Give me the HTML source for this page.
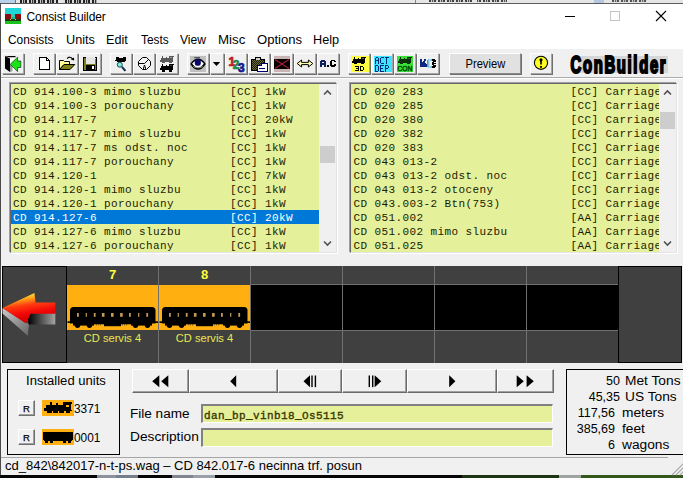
<!DOCTYPE html>
<html>
<head>
<meta charset="utf-8">
<title>Consist Builder</title>
<style>
*{margin:0;padding:0;box-sizing:border-box;}
html,body{width:683px;height:478px;overflow:hidden;background:#f0f0f0;}
body{font-family:"Liberation Sans",sans-serif;font-size:12px;color:#000;position:relative;}
.abs{position:absolute;}
#win{position:absolute;left:0;top:0;width:683px;height:478px;overflow:hidden;background:#f0f0f0;}
/* strip of window behind */
#behind{left:0;top:0;width:683px;height:3px;background:#e6e6e6;}
#topline{left:0;top:3px;width:683px;height:1px;background:#5c5c5c;}
#leftline{left:0;top:3px;width:1px;height:472px;background:#4a4a4a;}
#titlebar{left:1px;top:4px;width:682px;height:30px;background:#fff;}
#menubar{left:1px;top:34px;width:682px;height:15px;background:#fff;}
.title{left:26.5px;top:10px;font-size:12px;line-height:15px;letter-spacing:-0.1px;white-space:nowrap;}
.mi{top:33px;font-size:12px;line-height:15px;white-space:nowrap;transform-origin:0 0;}
/* toolbar */
.tb{top:53px;width:22px;height:21px;background:#f0f0f0;border-top:1px solid #fff;border-left:1px solid #fff;border-right:1px solid #a6a6a6;border-bottom:1px solid #a6a6a6;box-shadow:1px 1px 0 #707070;}
.tb svg{position:absolute;left:2px;top:2px;}
#tbline1{left:1px;top:77px;width:682px;height:1px;background:#acacac;}
#tbline2{left:1px;top:78px;width:682px;height:1px;background:#fff;}
/* list boxes */
.lb{top:83px;height:170px;background:#e5f09b;border:1px solid;border-color:#666 #e3e3e3 #e3e3e3 #666;box-shadow:-1px -1px 0 #a0a0a0,1px 1px 0 #fff;}
.lbi{position:absolute;left:0;top:0;right:0;bottom:0;overflow:hidden;}
.lb pre{font-family:"Liberation Mono",monospace;font-size:11px;line-height:14px;letter-spacing:0.4px;color:#1c1c00;position:absolute;left:1px;top:1px;white-space:pre;}
.lb .sel{position:absolute;left:0;top:126px;height:14px;background:#0078d7;}
.sb{position:absolute;top:0;right:0;width:17px;height:168px;background:#f0f0f0;}
.sb .thumb{position:absolute;left:1px;width:15px;background:#cdcdcd;}
.sb svg{position:absolute;left:0;}
/* consist panel */
#panel{left:2px;top:266px;width:680px;height:97px;background:#404040;}
.slot{position:absolute;top:0;width:92px;height:97px;border-left:1px solid #707070;}
.slot .mid{position:absolute;left:0;top:19px;width:91px;height:45px;background:#000;}
.slot .mid.on{background:#ffb010;}
.slot .num{position:absolute;left:0;top:1px;width:91px;text-align:center;font-weight:bold;font-size:13px;line-height:15px;color:#ffff3c;}
.slot .nm{position:absolute;left:0;top:65px;width:91px;text-align:center;font-size:11.1px;line-height:14px;color:#e8e850;white-space:nowrap;}
.hl1{position:absolute;left:65px;width:552px;height:1px;background:#707070;}
/* bottom */
.frame{border:1px solid #000;background:#f0f0f0;}
.nav{top:369px;height:24px;background:#f0f0f0;border-top:1px solid #fff;border-left:1px solid #fff;border-right:1px solid #6a6a6a;border-bottom:1px solid #6a6a6a;box-shadow:inset -1px -1px 0 #a0a0a0;}
.nav svg{position:absolute;top:5px;left:50%;}
.fld{left:201px;width:352px;height:19px;background:#e6f09b;border-top:2px solid #808080;border-left:2px solid #808080;border-right:1px solid #fff;border-bottom:1px solid #fff;}
.lbl{font-size:12.5px;line-height:16px;white-space:nowrap;transform-origin:0 0;}
.st{font-size:12.5px;line-height:16px;white-space:nowrap;transform-origin:0 0;}
.sl{transform:scaleX(1.10);}
.rb{left:18px;width:17px;height:16px;background:#f0f0f0;border-top:1px solid #fff;border-left:1px solid #fff;border-right:1px solid #707070;border-bottom:1px solid #707070;box-shadow:inset -1px -1px 0 #a0a0a0;font-size:9.5px;line-height:15px;text-align:center;color:#000;-webkit-text-stroke:0.25px #000;}
#status{left:1px;top:457px;width:682px;height:18px;background:#f0f0f0;}
#stline{left:1px;top:457px;width:667px;height:1px;background:#a6a6a6;}
#desk{left:0;top:475px;width:683px;height:3px;background:linear-gradient(90deg,#050505 0 97px,#8a92a0 97px 116px,#767e8c 116px 138px,#050505 138px 172px,#80868f 172px 193px,#9aa0a8 193px 215px,#050505 215px 462px,#1c3414 462px 559px,#a0a4a0 559px 581px,#34581c 581px 683px);}
</style>
</head>
<body>
<div id="win">
<div class="abs" id="behind"></div>
<div class="abs" style="left:0;top:0;width:15px;height:3px;background:#b9d1ea;"></div>
<div class="abs" style="left:15px;top:0;width:1px;height:3px;background:#777;"></div>
<div class="abs" style="left:33px;top:0;width:1px;height:3px;background:#777;"></div>
<div class="abs" style="left:20px;top:0;width:77px;height:3px;background:repeating-linear-gradient(90deg,#222 0 2px,#ccc 2px 3px,#333 3px 4px,#aaa 4px 5px,#222 5px 7px,#ddd 7px 9px);"></div>
<div class="abs" style="left:58px;top:0;width:5px;height:3px;background:#e6e6e6;"></div>
<div class="abs" style="left:415px;top:0;width:1px;height:3px;background:#888;"></div>
<div class="abs" style="left:429px;top:0;width:78px;height:2px;background:repeating-linear-gradient(90deg,#444 0 2px,#ccc 2px 3px,#555 3px 4px,#bbb 4px 5px,#444 5px 7px,#ddd 7px 9px);"></div>
<div class="abs" style="left:472px;top:0;width:5px;height:3px;background:#e6e6e6;"></div>
<div class="abs" style="left:594px;top:0;width:10px;height:3px;background:#b4c6e0;"></div>
<div class="abs" style="left:612px;top:0;width:35px;height:2px;background:repeating-linear-gradient(90deg,#555 0 2px,#ccc 2px 3px,#666 3px 4px,#bbb 4px 5px,#555 5px 7px,#ddd 7px 9px);"></div>
<div class="abs" id="topline"></div>
<div class="abs" id="titlebar"></div>
<div class="abs" id="menubar"></div>
<div class="abs" id="leftline"></div>

<!-- title icon -->
<svg class="abs" style="left:5px;top:8px" width="16" height="16" viewBox="0 0 16 16" shape-rendering="crispEdges">
<rect x="0" y="0" width="16" height="6" fill="#1fd6d6"/>
<rect x="0" y="6" width="16" height="6" fill="#8a0e0e"/>
<rect x="6" y="6" width="4" height="6" fill="#27c9b4"/>
<rect x="7" y="9" width="2" height="3" fill="#22b070"/>
<rect x="0" y="11" width="16" height="2" fill="#1c3a10"/>
<rect x="5" y="11" width="1" height="1" fill="#d8d060"/><rect x="10" y="11" width="1" height="1" fill="#d8d060"/>
<rect x="0" y="13" width="16" height="3" fill="#1ec21e"/>
</svg>
<div class="abs title">Consist Builder</div>
<!-- window controls -->
<svg class="abs" style="left:560px;top:6px" width="115" height="22" viewBox="0 0 115 22">
<path d="M5 10.5H15" stroke="#000" stroke-width="1"/>
<rect x="50.5" y="5.5" width="9" height="9" fill="none" stroke="#c4c4c4" stroke-width="1"/>
<path d="M96 5L106 15M106 5L96 15" stroke="#000" stroke-width="1.1"/>
</svg>

<!-- menu -->
<div class="abs mi" style="left:8px;transform:scaleX(0.99)">Consists</div>
<div class="abs mi" style="left:66px;transform:scaleX(1.06)">Units</div>
<div class="abs mi" style="left:106px;transform:scaleX(1.055)">Edit</div>
<div class="abs mi" style="left:141px;transform:scaleX(0.99)">Tests</div>
<div class="abs mi" style="left:180px;transform:scaleX(1.01)">View</div>
<div class="abs mi" style="left:217.5px;transform:scaleX(1.108)">Misc</div>
<div class="abs mi" style="left:256.5px;transform:scaleX(1.09)">Options</div>
<div class="abs mi" style="left:313px;transform:scaleX(1.058)">Help</div>

<!-- TOOLBAR -->
<div class="abs tb" id="b1" style="left:2px"></div>
<div class="abs tb" id="b2" style="left:33px"></div>
<div class="abs tb" id="b3" style="left:56px"></div>
<div class="abs tb" id="b4" style="left:79px"></div>
<div class="abs tb" id="b5" style="left:110px"></div>
<div class="abs tb" id="b6" style="left:133px"></div>
<div class="abs tb" id="b7" style="left:156px"></div>
<div class="abs tb" id="b8" style="left:187px"></div>
<div class="abs tb" id="b9" style="left:210px;width:14px"></div>
<div class="abs tb" id="b10" style="left:225px"></div>
<div class="abs tb" id="b11" style="left:248px"></div>
<div class="abs tb" id="b12" style="left:271px"></div>
<div class="abs tb" id="b13" style="left:294px"></div>
<div class="abs tb" id="b14" style="left:317px"></div>
<div class="abs tb" id="b15" style="left:348px"></div>
<div class="abs tb" id="b16" style="left:371px"></div>
<div class="abs tb" id="b17" style="left:394px"></div>
<div class="abs tb" id="b18" style="left:417px"></div>
<div class="abs tb" id="bprev" style="left:449px;width:72px;background:#e1e1e1;border-color:#fff #8a8a8a #8a8a8a #fff;text-align:center;font-size:12px;line-height:20px;"><span style="display:inline-block;transform:scaleX(.93)">Preview</span></div>
<div class="abs tb" id="bwarn" style="left:530px"></div>
<div class="abs" id="logo" style="left:570px;top:52px;"></div>
<div class="abs" id="tbline1"></div>
<div class="abs" id="tbline2"></div>

<svg class="abs" id="icons" style="left:0;top:0;pointer-events:none;z-index:5" width="683" height="478" viewBox="0 0 683 478">
<!-- b1 exit door -->
<g>
<polygon points="10,57 15,57 15,71 10,71" fill="#fff"/>
<polygon points="10,65 12.5,64 12.5,71 10,72" fill="#9a9a9a"/>
<polygon points="5,56 15.5,56 15.5,57.3 9,57.3" fill="#000"/>
<polygon points="5,56 10,58.5 10,72 5,68.5" fill="#000"/>
<polygon points="10.2,64.3 17.6,57.2 17.6,61 20.8,61 20.8,67.5 17.6,67.5 17.6,71.6" fill="#18e418" stroke="#0a3a0a" stroke-width="0.7"/>
</g>
<!-- b2 new -->
<g shape-rendering="crispEdges">
<polygon points="39.5,57.5 46.5,57.5 49.5,60.5 49.5,69.5 39.5,69.5" fill="#fff" stroke="#000" stroke-width="1"/>
<polyline points="46.5,57.5 46.5,60.5 49.5,60.5" fill="none" stroke="#000" stroke-width="1"/>
</g>
<!-- b3 open -->
<g stroke-linejoin="miter">
<polygon points="59.5,69.5 59.5,60.5 63.5,60.5 64.5,61.5 69.5,61.5 69.5,64.5 64,64.5" fill="#ffff99" stroke="#000" stroke-width="1"/>
<polygon points="59.5,69.5 64.2,64.5 74.8,64.5 70,69.5" fill="#7e8018" stroke="#000" stroke-width="1"/>
<path d="M67.2 58.8C68.2 56.6 71 56.6 72.6 59" fill="none" stroke="#000" stroke-width="1.1"/>
<polygon points="70.8,59.6 74.2,60.6 74,57.4" fill="#000"/>
</g>
<!-- b4 save -->
<g shape-rendering="crispEdges">
<rect x="83" y="57" width="14" height="14" fill="#000"/>
<rect x="84" y="58" width="12" height="12" fill="#7c7c20"/>
<rect x="86" y="57" width="9" height="7" fill="#e4e4e4"/>
<rect x="95" y="58" width="1" height="1" fill="#e0e0e0"/>
<rect x="86" y="65" width="9" height="5" fill="#000"/>
<rect x="92" y="66" width="2" height="3" fill="#fff"/>
</g>
<!-- b5 search -->
<g>
<g shape-rendering="crispEdges" fill="#000"><rect x="116" y="57" width="3" height="1"/><rect x="123" y="57" width="3" height="1"/><rect x="116" y="58" width="10" height="2"/><rect x="115" y="60" width="11" height="1"/><rect x="117" y="61" width="8" height="1"/></g>
<circle cx="119.8" cy="64.7" r="2.5" fill="#86ece4" stroke="#0c4a4a" stroke-width="1"/>
<path d="M122 66.8L125.4 70.8" stroke="#081838" stroke-width="2" stroke-linecap="butt"/>
<path d="M122.4 66.5L125.6 70.2" stroke="#3888b0" stroke-width="0.7"/>
</g>
<!-- b6 gauge -->
<g fill="none" stroke="#000" stroke-width="1">
<polygon points="142.5,57.5 146.5,57.5 150.5,61.5 150.5,65.5 146.5,69.5 142.5,69.5 138.5,65.5 138.5,61.5" fill="#f4f4f4"/>
<path d="M138.5 63.5H144.5L148.2 59.8"/>
<path d="M143.5 69.5v-2.5h2v2.5M144 66.5v-1h1v1" stroke-width="0.9"/>
</g>
<!-- b7 locos -->
<g shape-rendering="crispEdges" fill="#5a5a5a"><rect x="162" y="56" width="1" height="2"/><rect x="166" y="57" width="1" height="1"/><rect x="169" y="56" width="5" height="1"/><rect x="169" y="57" width="4" height="4"/><rect x="161" y="58" width="8" height="3"/><rect x="160" y="60" width="1" height="1"/><rect x="160" y="61" width="13" height="1"/><rect x="162" y="62" width="3" height="1"/><rect x="169" y="62" width="3" height="1"/><rect x="170" y="57" width="2" height="1" fill="#9a9a9a"/></g>
<g shape-rendering="crispEdges" fill="#000"><rect x="162" y="64" width="1" height="2"/><rect x="166" y="65" width="1" height="1"/><rect x="169" y="64" width="5" height="1"/><rect x="169" y="65" width="4" height="4"/><rect x="161" y="66" width="8" height="3"/><rect x="160" y="68" width="1" height="1"/><rect x="160" y="69" width="13" height="1"/><rect x="162" y="70" width="3" height="2"/><rect x="169" y="70" width="3" height="2"/><rect x="170" y="65" width="2" height="1" fill="#444"/></g>
<!-- b8 eye -->
<g>
<rect x="190" y="56" width="16" height="16" fill="#c0c0c0" shape-rendering="crispEdges"/>
<path d="M190.2 63.9C192.6 60.2 195.6 58.4 198 58.4C200.6 58.4 203.6 60.2 205.8 63.9C203.4 67.9 200.6 69.8 198 69.8C195.4 69.8 192.6 67.9 190.2 63.9Z" fill="#000"/>
<path d="M192.2 63.6C194 61.4 196 60.2 198 60.2C200 60.2 202 61.4 203.8 63.6C202.4 66 200.4 67.6 198 67.6C195.6 67.6 193.6 66 192.2 63.6Z" fill="#fff"/>
<rect x="194.8" y="59.2" width="6" height="6.6" rx="2.2" fill="#08086c"/>
<path d="M193 66.2C195.5 68.3 200.5 68.3 203 66.2" fill="none" stroke="#b0b0b0" stroke-width="0.9"/>
<path d="M192.5 65L194 66.6M203.5 65L202 66.6" stroke="#000" stroke-width="0.9"/>
<path d="M194.2 57.7H200" stroke="#333" stroke-width="0.9"/>
</g>
<!-- b9 dropdown -->
<polygon points="212.8,62 220.2,62 216.5,66" fill="#000"/>
<!-- b10 123 -->
<g font-family="Liberation Sans, sans-serif" font-weight="bold" font-size="12" stroke-width="0.7">
<text x="228.6" y="65.6" fill="#c01828" stroke="#c01828">1</text>
<text x="232.8" y="68.6" fill="#208848" stroke="#208848">2</text>
<text x="238" y="71.7" fill="#181890" stroke="#181890">3</text>
</g>
<!-- b11 clipboard -->
<defs><pattern id="dith" width="2" height="2" patternUnits="userSpaceOnUse"><rect width="2" height="2" fill="#1c1c0c"/><rect width="1" height="1" fill="#6c6c34"/><rect x="1" y="1" width="1" height="1" fill="#6c6c34"/></pattern></defs>
<g shape-rendering="crispEdges">
<rect x="251" y="59" width="14" height="12" fill="#000"/>
<rect x="252" y="60" width="12" height="10" fill="url(#dith)"/>
<rect x="255" y="57" width="6" height="3" fill="#000"/>
<rect x="256" y="58" width="4" height="2" fill="#d0d0d0"/>
<rect x="257" y="65" width="11" height="7" fill="#000070"/>
<rect x="261" y="63" width="7" height="3" fill="#000070"/>
<rect x="258" y="66" width="9" height="5" fill="#fff"/>
<rect x="262" y="64" width="5" height="2" fill="#fff"/>
<rect x="259" y="68" width="6" height="1" fill="#000070"/>
</g>
<!-- b12 X -->
<g>
<rect x="274" y="56" width="16" height="16" fill="#c8b4b4" shape-rendering="crispEdges"/>
<rect x="274" y="59" width="16" height="10" fill="#000" shape-rendering="crispEdges"/>
<path d="M275 59.5L289 68.5M289 59.5L275 68.5" stroke="#b01834" stroke-width="1.1"/>
</g>
<!-- b13 arrow -->
<polygon points="297.2,63.5 301.6,60 301.6,62.4 308.4,62.4 308.4,60 312.8,63.5 308.4,67 308.4,64.6 301.6,64.6 301.6,67" fill="#ffffb0" stroke="#000" stroke-width="1"/>
<!-- b14 A.C -->
<g shape-rendering="crispEdges">
<path d="M321 60h4v1h1v6h-2v-2h-2v2h-2v-6h1zM322 62v1h2v-1z" fill="#10205c" fill-rule="evenodd"/>
<rect x="327" y="65" width="2" height="2" fill="#000"/>
<path d="M331 60h4v1h1v1h-2v-1h-2v4h2v-1h2v2h-1v1h-4v-1h-1v-5h1z" fill="#000"/>
</g>
<!-- b15 3D -->
<g>
<rect x="351" y="56" width="18" height="16" fill="#ffff40" shape-rendering="crispEdges"/>
<g shape-rendering="crispEdges" fill="#000"><rect x="354" y="57" width="1" height="2"/><rect x="358" y="58" width="1" height="1"/><rect x="361" y="57" width="5" height="1"/><rect x="361" y="58" width="4" height="4"/><rect x="353" y="59" width="8" height="3"/><rect x="352" y="61" width="1" height="1"/><rect x="352" y="62" width="13" height="1"/><rect x="354" y="63" width="3" height="1"/><rect x="361" y="63" width="3" height="1"/><rect x="362" y="58" width="2" height="1" fill="#554"/></g>
<g shape-rendering="crispEdges" fill="#000"><rect x="355" y="66" width="4" height="1"/><rect x="358" y="67" width="1" height="1"/><rect x="356" y="68" width="3" height="1"/><rect x="358" y="69" width="1" height="1"/><rect x="355" y="70" width="4" height="1"/><rect x="360" y="66" width="3" height="1"/><rect x="360" y="67" width="1" height="1"/><rect x="363" y="67" width="1" height="1"/><rect x="360" y="68" width="1" height="1"/><rect x="363" y="68" width="1" height="1"/><rect x="360" y="69" width="1" height="1"/><rect x="363" y="69" width="1" height="1"/><rect x="360" y="70" width="3" height="1"/></g>
</g>
<!-- b16 ACT DEP -->
<g>
<rect x="374" y="56" width="18" height="16" fill="#40e4ff" shape-rendering="crispEdges"/>
<g shape-rendering="crispEdges" fill="#002c7c"><rect x="376" y="57" width="2" height="1"/><rect x="375" y="58" width="1" height="1"/><rect x="378" y="58" width="1" height="1"/><rect x="375" y="59" width="1" height="1"/><rect x="378" y="59" width="1" height="1"/><rect x="375" y="60" width="4" height="1"/><rect x="375" y="61" width="1" height="1"/><rect x="378" y="61" width="1" height="1"/><rect x="375" y="62" width="1" height="1"/><rect x="378" y="62" width="1" height="1"/><rect x="375" y="63" width="1" height="1"/><rect x="378" y="63" width="1" height="1"/><rect x="381" y="57" width="3" height="1"/><rect x="380" y="58" width="1" height="1"/><rect x="380" y="59" width="1" height="1"/><rect x="380" y="60" width="1" height="1"/><rect x="380" y="61" width="1" height="1"/><rect x="380" y="62" width="1" height="1"/><rect x="381" y="63" width="3" height="1"/><rect x="385" y="57" width="4" height="1"/><rect x="386" y="58" width="1" height="1"/><rect x="386" y="59" width="1" height="1"/><rect x="386" y="60" width="1" height="1"/><rect x="386" y="61" width="1" height="1"/><rect x="386" y="62" width="1" height="1"/><rect x="386" y="63" width="1" height="1"/></g><g shape-rendering="crispEdges" fill="#002c7c"><rect x="375" y="65" width="3" height="1"/><rect x="375" y="66" width="1" height="1"/><rect x="378" y="66" width="1" height="1"/><rect x="375" y="67" width="1" height="1"/><rect x="378" y="67" width="1" height="1"/><rect x="375" y="68" width="1" height="1"/><rect x="378" y="68" width="1" height="1"/><rect x="375" y="69" width="1" height="1"/><rect x="378" y="69" width="1" height="1"/><rect x="375" y="70" width="1" height="1"/><rect x="378" y="70" width="1" height="1"/><rect x="375" y="71" width="3" height="1"/><rect x="380" y="65" width="4" height="1"/><rect x="380" y="66" width="1" height="1"/><rect x="380" y="67" width="1" height="1"/><rect x="380" y="68" width="3" height="1"/><rect x="380" y="69" width="1" height="1"/><rect x="380" y="70" width="1" height="1"/><rect x="380" y="71" width="4" height="1"/><rect x="385" y="65" width="3" height="1"/><rect x="385" y="66" width="1" height="1"/><rect x="388" y="66" width="1" height="1"/><rect x="385" y="67" width="1" height="1"/><rect x="388" y="67" width="1" height="1"/><rect x="385" y="68" width="3" height="1"/><rect x="385" y="69" width="1" height="1"/><rect x="385" y="70" width="1" height="1"/><rect x="385" y="71" width="1" height="1"/></g>
</g>
<!-- b17 CON -->
<g>
<rect x="397" y="56" width="16" height="16" fill="#38e038" shape-rendering="crispEdges"/>
<g shape-rendering="crispEdges" fill="#0c300c"><rect x="400" y="57" width="1" height="2"/><rect x="404" y="58" width="1" height="1"/><rect x="407" y="57" width="5" height="1"/><rect x="407" y="58" width="4" height="4"/><rect x="399" y="59" width="8" height="3"/><rect x="398" y="61" width="1" height="1"/><rect x="398" y="62" width="13" height="1"/><rect x="400" y="63" width="3" height="1"/><rect x="407" y="63" width="3" height="1"/><rect x="408" y="58" width="2" height="1" fill="#1a6a1a"/></g>
<text x="397.4" y="70.8" font-family="Liberation Sans, sans-serif" font-size="6.8" textLength="15" lengthAdjust="spacingAndGlyphs" fill="#004c00" stroke="#004c00" stroke-width="0.45">CON</text>
</g>
<!-- b18 KC -->
<defs><linearGradient id="gk" x1="0" x2="1" y1="0" y2="0"><stop offset="0" stop-color="#3c8cc0"/><stop offset="0.5" stop-color="#a8e4f0"/><stop offset="1" stop-color="#58b0d8"/></linearGradient></defs>
<g shape-rendering="crispEdges">
<path d="M420 59h2v3h1v-1h1v-2h2v2h-1v2h1v1h1v3h-7z" fill="#102880"/>
<path d="M427 60h1v-1h4v2h-2v5h2v2h-4v-1h-1z" fill="url(#gk)"/>
<path d="M432 59h3v1h1v2h-2v1h2v1h-2v1h2v2h-1v1h-3v-2h1v-1h-1v-3h1v-1h-1z" fill="#000"/>
</g>
<!-- warn -->
<g>
<circle cx="541" cy="62.8" r="6.6" fill="#ffff20" stroke="#000" stroke-width="1.1"/>
<path d="M541 58.2a1.6 1.6 0 0 1 1.6 1.6c0 .8-.6 1.2-.8 1.8v3h-1.6v-3c-.2-.6-.8-1-.8-1.8a1.6 1.6 0 0 1 1.6-1.6z" fill="#000"/>
<rect x="540.1" y="66" width="1.8" height="1.8" fill="#000"/>
</g>
<!-- arrow -->
<defs>
<linearGradient id="ga" gradientUnits="userSpaceOnUse" x1="33" y1="292" x2="37" y2="318"><stop offset="0" stop-color="#fff040"/><stop offset="0.22" stop-color="#ffa018"/><stop offset="0.45" stop-color="#ff3c10"/><stop offset="0.75" stop-color="#f40808"/><stop offset="1" stop-color="#d80000"/></linearGradient>
<linearGradient id="gb" gradientUnits="userSpaceOnUse" x1="28" y1="0" x2="56" y2="0"><stop offset="0" stop-color="#000"/><stop offset="1" stop-color="#a8a8a8"/></linearGradient>
<linearGradient id="gc" gradientUnits="userSpaceOnUse" x1="4" y1="308" x2="28" y2="334"><stop offset="0" stop-color="#c8c8c8"/><stop offset="1" stop-color="#6a6a6a"/></linearGradient>
</defs>
<polygon points="2.5,308 2.5,313.5 27.8,335.8 29,324 25,322" fill="url(#gc)"/>
<polygon points="28,313 55.3,313 55.3,324.6 28.5,324.6" fill="url(#gb)"/>
<polygon points="2.5,308 34.4,293 35.6,302.4 55.3,302.4 55.3,313.8 30.5,313.8 26,323.6" fill="url(#ga)"/>
<g><path d="M70.0 323.5V310.5Q70.0 307 73.5 307H152.0Q155.5 307 155.5 310.5V323.5Z" fill="#000"/><rect x="67.5" y="321.3" width="3" height="1.6" fill="#000"/><rect x="155.0" y="321.3" width="3" height="1.6" fill="#000"/><rect x="73.0" y="323" width="21" height="2.6" fill="#000"/><circle cx="77.5" cy="325.3" r="2.7" fill="#000"/><circle cx="89.5" cy="325.3" r="2.7" fill="#000"/><rect x="131.0" y="323" width="21" height="2.6" fill="#000"/><circle cx="135.5" cy="325.3" r="2.7" fill="#000"/><circle cx="147.5" cy="325.3" r="2.7" fill="#000"/><rect x="94.0" y="323" width="38" height="1.3" fill="#000"/><rect x="104.0" y="323" width="17" height="3.2" fill="#000"/><path d="M96.0 324.8h6M122.0 324.8h6" stroke="#3a2800" stroke-width="0.8" stroke-dasharray="1 1"/><rect x="77.0" y="313" width="1.8" height="3.8" fill="#c49a5a"/><rect x="85.7" y="313" width="1.2" height="3.8" fill="#c49a5a"/><rect x="93.8" y="313" width="1.8" height="3.8" fill="#c49a5a"/><rect x="101.9" y="313" width="2.6" height="3.8" fill="#c49a5a"/><rect x="111.0" y="313" width="2.6" height="3.8" fill="#c49a5a"/><rect x="120.1" y="313" width="2.6" height="3.8" fill="#c49a5a"/><rect x="129.0" y="313" width="1.8" height="3.8" fill="#c49a5a"/><rect x="138.1" y="313" width="1.2" height="3.8" fill="#c49a5a"/><rect x="146.3" y="313" width="1.8" height="3.8" fill="#c49a5a"/></g><g><path d="M162.0 323.5V310.5Q162.0 307 165.5 307H244.0Q247.5 307 247.5 310.5V323.5Z" fill="#000"/><rect x="159.5" y="321.3" width="3" height="1.6" fill="#000"/><rect x="247.0" y="321.3" width="3" height="1.6" fill="#000"/><rect x="165.0" y="323" width="21" height="2.6" fill="#000"/><circle cx="169.5" cy="325.3" r="2.7" fill="#000"/><circle cx="181.5" cy="325.3" r="2.7" fill="#000"/><rect x="223.0" y="323" width="21" height="2.6" fill="#000"/><circle cx="227.5" cy="325.3" r="2.7" fill="#000"/><circle cx="239.5" cy="325.3" r="2.7" fill="#000"/><rect x="186.0" y="323" width="38" height="1.3" fill="#000"/><rect x="196.0" y="323" width="17" height="3.2" fill="#000"/><path d="M188.0 324.8h6M214.0 324.8h6" stroke="#3a2800" stroke-width="0.8" stroke-dasharray="1 1"/><rect x="169.0" y="313" width="1.8" height="3.8" fill="#c49a5a"/><rect x="177.7" y="313" width="1.2" height="3.8" fill="#c49a5a"/><rect x="185.8" y="313" width="1.8" height="3.8" fill="#c49a5a"/><rect x="193.9" y="313" width="2.6" height="3.8" fill="#c49a5a"/><rect x="203.0" y="313" width="2.6" height="3.8" fill="#c49a5a"/><rect x="212.1" y="313" width="2.6" height="3.8" fill="#c49a5a"/><rect x="221.0" y="313" width="1.8" height="3.8" fill="#c49a5a"/><rect x="230.1" y="313" width="1.2" height="3.8" fill="#c49a5a"/><rect x="238.3" y="313" width="1.8" height="3.8" fill="#c49a5a"/></g><!-- nav glyphs -->
<polygon points="152.2,381.3 159.3,375.3 159.3,387.3" fill="#000"/><polygon points="161.2,381.3 168.3,375.3 168.3,387.3" fill="#000"/><polygon points="230.2,381.3 236.2,375.3 236.2,387.3" fill="#000"/><polygon points="303.5,381.3 310.0,375.3 310.0,387.3" fill="#000"/><rect x="311.3" y="375.5" width="1.4" height="11.6" fill="#000"/><rect x="314.7" y="375.5" width="1.4" height="11.6" fill="#000"/><rect x="368.6" y="375.5" width="1.4" height="11.6" fill="#000"/><rect x="372.0" y="375.5" width="1.4" height="11.6" fill="#000"/><polygon points="381.3,381.3 374.6,375.3 374.6,387.3" fill="#000"/><polygon points="455.4,381.3 449.2,375.3 449.2,387.3" fill="#000"/><polygon points="523.8,381.3 516.7,375.3 516.7,387.3" fill="#000"/><polygon points="533.8,381.3 526.6,375.3 526.6,387.3" fill="#000"/>
<g shape-rendering="crispEdges" fill="#000"><rect x="50" y="402" width="2" height="3"/><rect x="56" y="403" width="2" height="2"/><rect x="63" y="402" width="9" height="2"/><rect x="63" y="404" width="8" height="6"/><rect x="69" y="403" width="2" height="1"/><rect x="46" y="405" width="18" height="5"/><rect x="44" y="408" width="3" height="2"/><rect x="44" y="410" width="28" height="1"/><rect x="47" y="411" width="5" height="2"/><rect x="53" y="411" width="5" height="2"/><rect x="59" y="411" width="5" height="2"/><rect x="66" y="411" width="4" height="2"/><rect x="66" y="405" width="3" height="2" fill="#ffb010"/></g><g shape-rendering="crispEdges" fill="#000"><rect x="43" y="432" width="30" height="8"/><rect x="44" y="440" width="28" height="1"/><rect x="45" y="441" width="3" height="2"/><rect x="50" y="441" width="3" height="2"/><rect x="63" y="441" width="3" height="2"/><rect x="68" y="441" width="3" height="2"/></g><path d="M672 475L683.5 463.5M676 475L683.5 467.5M680 475L683.5 471.5" stroke="#a8a8a8" stroke-width="1.1" fill="none"/>
<!-- logo -->
<rect x="579" y="56" width="89" height="17" fill="#d6d6d6"/>
<text transform="translate(570.6,72.6) scale(0.645,1)" font-family="Liberation Sans, sans-serif" font-weight="bold" font-size="23" letter-spacing="2.6" fill="#000" stroke="#000" stroke-width="2.1" stroke-linejoin="miter">ConBuilder</text>
</svg>

<!-- LISTS -->
<div class="abs lb" id="lb1" style="left:10px;width:327px;"><div class="lbi">
<div class="sel" style="width:308px"></div>
<pre style="left:2px">CD 914.100-3 mimo sluzbu       [CC] 1kW
CD 914.100-3 porouchany        [CC] 1kW
CD 914.117-7                   [CC] 20kW
CD 914.117-7 mimo sluzbu       [CC] 1kW
CD 914.117-7 ms odst. noc      [CC] 1kW
CD 914.117-7 porouchany        [CC] 1kW
CD 914.120-1                   [CC] 7kW
CD 914.120-1 mimo sluzbu       [CC] 1kW
CD 914.120-1 porouchany        [CC] 1kW
<span style="color:#fff">CD 914.127-6                   [CC] 20kW</span>
CD 914.127-6 mimo sluzbu       [CC] 1kW
CD 914.127-6 porouchany        [CC] 1kW</pre>
<div class="sb"><div class="thumb" style="top:62px;height:17px"></div>
<svg style="top:0" width="17" height="17" viewBox="0 0 17 17"><path d="M5 10.5L8.5 7L12 10.5" fill="none" stroke="#505050" stroke-width="1.6"/></svg>
<svg style="top:151px" width="17" height="17" viewBox="0 0 17 17"><path d="M5 6.5L8.5 10L12 6.5" fill="none" stroke="#505050" stroke-width="1.6"/></svg>
</div>
</div></div>
<div class="abs lb" id="lb2" style="left:350px;width:327px;"><div class="lbi">
<pre style="left:2.5px">CD 020 283                     [CC] Carriage
CD 020 285                     [CC] Carriage
CD 020 380                     [CC] Carriage
CD 020 382                     [CC] Carriage
CD 020 383                     [CC] Carriage
CD 043 013-2                   [CC] Carriage
CD 043 013-2 odst. noc         [CC] Carriage
CD 043 013-2 otoceny           [CC] Carriage
CD 043.003-2 Btn(753)          [CC] Carriage
CD 051.002                     [AA] Carriage
CD 051.002 mimo sluzbu         [AA] Carriage
CD 051.025                     [AA] Carriage</pre>
<div class="sb"><div class="thumb" style="top:28px;height:17px"></div>
<svg style="top:0" width="17" height="17" viewBox="0 0 17 17"><path d="M5 10.5L8.5 7L12 10.5" fill="none" stroke="#505050" stroke-width="1.6"/></svg>
<svg style="top:151px" width="17" height="17" viewBox="0 0 17 17"><path d="M5 6.5L8.5 10L12 6.5" fill="none" stroke="#505050" stroke-width="1.6"/></svg>
</div>
</div></div>

<!-- CONSIST PANEL -->
<div class="abs" id="panel">
<div class="abs" id="arrowbtn" style="left:0;top:0;width:65px;height:97px;border:1px solid #000;background:#404040;"></div>
<div class="slot" style="left:65px;border-left:none"><div class="num">7</div><div class="mid on"></div><div class="nm">CD servis 4</div></div>
<div class="slot" style="left:156px"><div class="num">8</div><div class="mid on"></div><div class="nm">CD servis 4</div></div>
<div class="slot" style="left:248px"><div class="mid"></div></div>
<div class="slot" style="left:340px"><div class="mid"></div></div>
<div class="slot" style="left:432px"><div class="mid"></div></div>
<div class="slot" style="left:524px"><div class="mid"></div></div>
<div class="hl1" style="left:249px;width:367px;top:18px"></div><div class="hl1" style="left:249px;width:367px;top:64px"></div>
<div class="abs" style="left:616px;top:0;width:64px;height:97px;border:1px solid #000;background:#404040;"></div>
</div>

<!-- BOTTOM -->
<div class="abs frame" style="left:7px;top:369px;width:113px;height:86px;"></div>
<div class="abs lbl" style="left:25.5px;top:373px;transform:scaleX(1.045)">Installed units</div>
<div class="abs rb" style="top:400px;">R</div>
<div class="abs rb" style="top:429px;">R</div>
<div class="abs" id="ic1" style="left:42px;top:400px;width:32px;height:16px;background:#ffb010;"></div>
<div class="abs" id="ic2" style="left:42px;top:429px;width:32px;height:16px;background:#ffb010;"></div>
<div class="abs lbl" style="left:73.7px;top:401px;transform:scaleX(.95)">3371</div>
<div class="abs lbl" style="left:73.7px;top:429.5px;transform:scaleX(.95)">0001</div>

<div class="abs nav" style="left:132px;width:57px"></div>
<div class="abs nav" style="left:189px;width:89px"></div>
<div class="abs nav" style="left:278px;width:64px"></div>
<div class="abs nav" style="left:342px;width:65px"></div>
<div class="abs nav" style="left:407px;width:90px"></div>
<div class="abs nav" style="left:497px;width:57px"></div>

<div class="abs lbl" style="left:130px;top:406px;transform:scaleX(1.085)">File name</div>
<div class="abs lbl" style="left:130px;top:429px;transform:scaleX(1.10)">Description</div>
<div class="abs fld" style="top:404px;"><span style="position:absolute;left:1px;top:2.5px;font-family:'Liberation Mono',monospace;font-weight:normal;-webkit-text-stroke:0.35px #383800;font-size:11px;line-height:14px;color:#383800;letter-spacing:0.4px;">dan_bp_vinb18_Os5115</span></div>
<div class="abs fld" style="top:428px;"></div>

<div class="abs frame" style="left:566px;top:369px;width:120px;height:86px;"></div>
<div class="abs st" style="left:520px;width:100px;text-align:right;top:372.5px;">50</div><div class="abs st sl" style="left:625px;top:372.5px;">Met Tons</div>
<div class="abs st" style="left:520px;width:100px;text-align:right;top:388.5px;">45,35</div><div class="abs st sl" style="left:625px;top:388.5px;">US Tons</div>
<div class="abs st" style="left:515px;width:100px;text-align:right;top:404.5px;">117,56</div><div class="abs st sl" style="left:622px;top:404.5px;">meters</div>
<div class="abs st" style="left:515px;width:100px;text-align:right;top:420.5px;">385,69</div><div class="abs st sl" style="left:622px;top:420.5px;">feet</div>
<div class="abs st" style="left:515px;width:100px;text-align:right;top:436.5px;">6</div><div class="abs st sl" style="left:622px;top:436.5px;">wagons</div>

<div class="abs" id="status"><span style="position:absolute;left:4px;top:1px;font-size:13px;line-height:16px;white-space:nowrap;">cd_842\842017-n-t-ps.wag &ndash; CD 842.017-6 necinna trf. posun</span></div>
<div class="abs" id="stline"></div>
<div class="abs" id="desk"></div>
</div>
</body>
</html>
